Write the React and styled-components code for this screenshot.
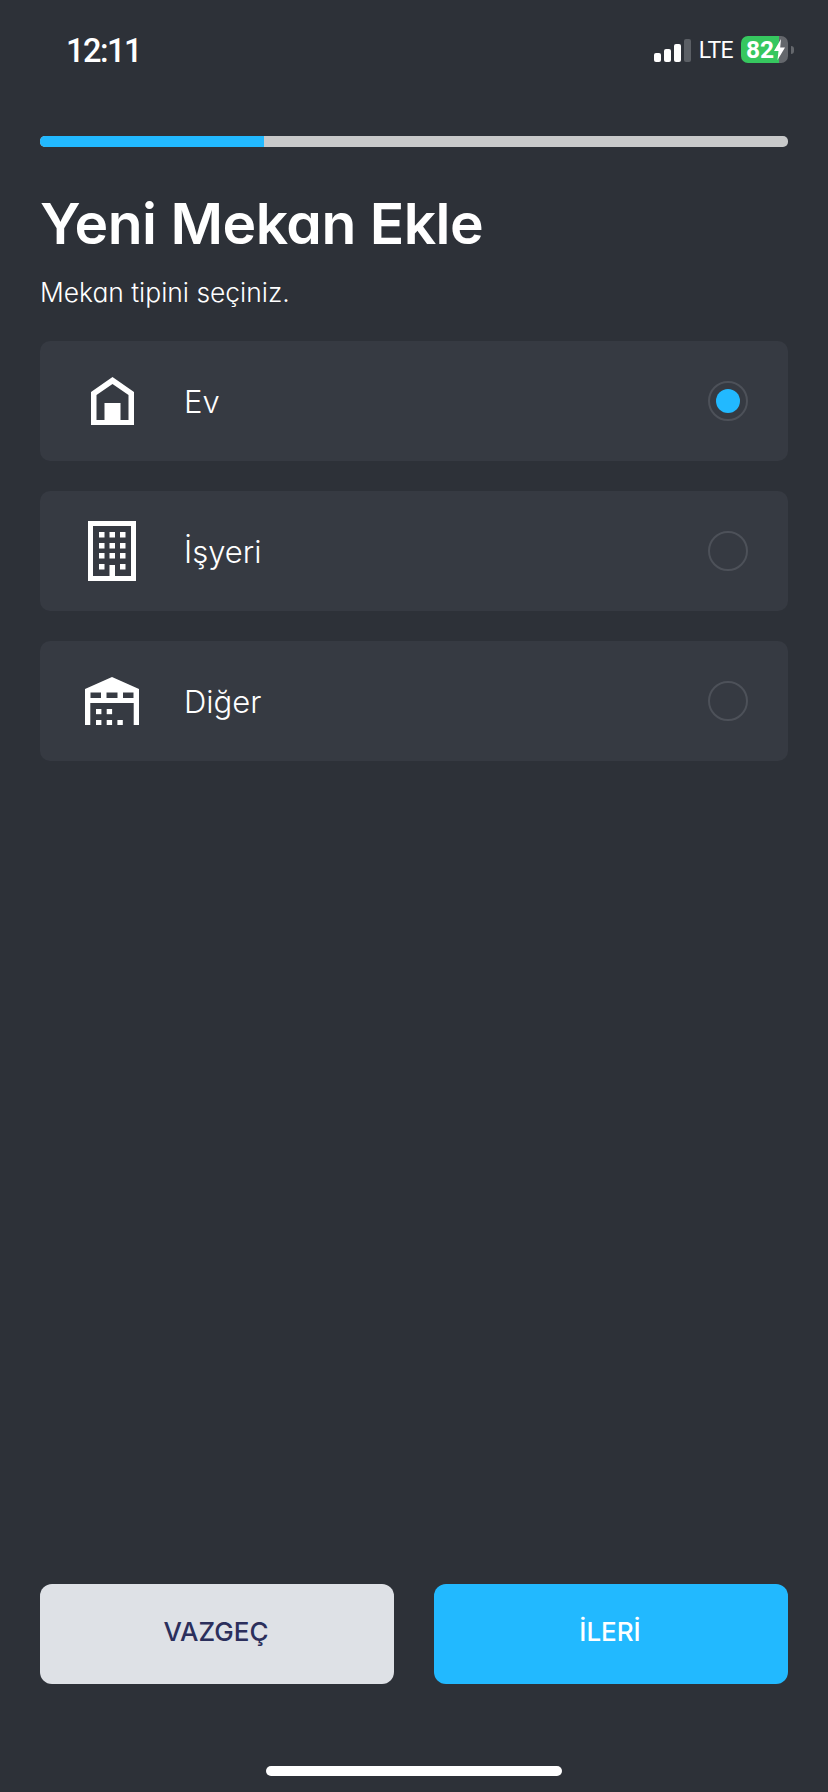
import React from "react";
import styled, { createGlobalStyle } from "styled-components";

const Global = createGlobalStyle`
  html, body { margin: 0; padding: 0; background: #2d3138; }
  * { box-sizing: border-box; }
`;

const Page = styled.div`
  width: 828px;
  height: 1792px;
  background: #2d3138;
  color: #fff;
  display: flex;
  flex-direction: column;
  padding: 36px 40px 16px;
  font-family: Inter, "Noto Sans", sans-serif;
  font-feature-settings: "cv11" 1, "ss03" 1;
`;

const StatusBar = styled.div`
  display: flex;
  align-items: center;
  justify-content: space-between;
  height: 27px;
  padding-left: 26px;
  margin-right: -6px;
`;

const Time = styled.span`
  font: 500 32.5px/27px Roboto, sans-serif;
  letter-spacing: -1.5px;
  padding-top: 3px;
`;

const StatusRight = styled.div`
  display: flex;
  align-items: center;
`;

const Signal = styled.div`
  display: flex;
  align-items: flex-end;
  gap: 3px;
  height: 23px;
  margin-top: 2px;
`;

const SignalBar = styled.i`
  display: block;
  width: 7px;
  height: ${(p) => p.$h}px;
  border-radius: 2px;
  background: ${(p) => (p.$off ? "#5b5f65" : "#fff")};
`;

const Lte = styled.span`
  font: 400 23px/27px Roboto, sans-serif;
  margin: 2px 8px 0 8px;
  letter-spacing: -0.6px;
`;

const Battery = styled.div`
  width: 47px;
  height: 27px;
  border-radius: 7px;
  overflow: hidden;
  display: flex;
  align-items: center;
  padding-left: 5px;
  font: 700 24.5px/27px Roboto, sans-serif;
  background: linear-gradient(to right, #36c75f 38px, #64676c 38px);
`;

const BatteryNub = styled.i`
  display: block;
  width: 3px;
  height: 8px;
  margin-left: 3px;
  border-radius: 0 3px 3px 0;
  background: #64676c;
`;

const Progress = styled.div`
  height: 11px;
  margin-top: 73px;
  border-radius: 5px;
  background: #c8c9ca;
  overflow: hidden;
`;

const ProgressFill = styled.div`
  height: 100%;
  width: 224px;
  background: #22b9ff;
`;

const Title = styled.h1`
  margin: 43px 0 0;
  font-size: 57px;
  line-height: 68px;
  font-weight: 600;
  letter-spacing: -0.5px;
`;

const Subtitle = styled.p`
  margin: 16px 0 0;
  font-size: 26.4px;
  line-height: 36px;
  font-weight: 300;
`;

const Options = styled.div`
  display: flex;
  flex-direction: column;
  gap: 30px;
  margin-top: 31px;
`;

const Card = styled.div`
  height: 120px;
  background: #363a42;
  border-radius: 10px;
  display: flex;
  align-items: center;
  padding-right: 40px;
`;

const IconSlot = styled.div`
  width: 144px;
  display: flex;
  justify-content: center;
`;

const Label = styled.span`
  flex: 1;
  font-size: 31px;
  font-weight: 300;
  line-height: 40px;
  padding-top: 1px;
`;

const Radio = styled.div`
  width: 40px;
  height: 40px;
  border-radius: 50%;
  border: 2px solid #4d5159;
  display: flex;
  align-items: center;
  justify-content: center;
`;

const RadioDot = styled.div`
  width: 24px;
  height: 24px;
  border-radius: 50%;
  background: #22b9ff;
`;

const Footer = styled.div`
  margin-top: auto;
  display: grid;
  grid-template-columns: 1fr 1fr;
  gap: 40px;
`;

const Button = styled.button`
  height: 100px;
  border: 0;
  border-radius: 12px;
  padding: 0 2px 6px 0;
  font-family: Inter, sans-serif;
  font-size: 26px;
  font-weight: 500;
  background: ${(p) => (p.$primary ? "#22b9ff" : "#dee1e6")};
  color: ${(p) => (p.$primary ? "#fff" : "#2b2f5c")};
`;

const HomeBar = styled.div`
  width: 296px;
  height: 10px;
  border-radius: 5px;
  background: #fff;
  margin: 82px auto 0;
`;

const Home = () => (
  <svg width="43" height="48" viewBox="0 0 43 48" fill="#fff">
    <path
      fillRule="evenodd"
      d="M21.5 0L43 15V48H0V15ZM21.5 7L5.5 18V43H13.5V26H29.5V43H37.5V18Z"
    />
  </svg>
);

const Building = () => (
  <svg width="48" height="60" viewBox="0 0 48 60" fill="#fff">
    <path fillRule="evenodd" d="M0 0H48V60H0ZM5 5V55H43V5Z" />
    {[11, 22, 32].map((y) =>
      [11, 21.5, 32].map((x) => <rect key={`${x}-${y}`} x={x} y={y} width="5.5" height="5.5" />)
    )}
    <rect x="11" y="43" width="5.5" height="5.5" />
    <rect x="32" y="43" width="5.5" height="5.5" />
    <rect x="21.5" y="44" width="5.5" height="12" />
  </svg>
);

const Warehouse = () => (
  <svg width="54" height="48" viewBox="0 0 54 48" fill="#fff">
    <path
      fillRule="evenodd"
      d="M27 0L54 12V48H48.7V26H5.3V48H0V12ZM5.5 15.5V21H16V15.5ZM21.5 15.5V21H32.5V15.5ZM38 15.5V21H48.5V15.5Z"
    />
    <rect x="11" y="32" width="5.4" height="5.2" />
    <rect x="21.7" y="32" width="5.4" height="5.2" />
    <rect x="11" y="43" width="5.4" height="5" />
    <rect x="21.7" y="43" width="5.4" height="5" />
    <rect x="32.4" y="43" width="5.4" height="5" />
  </svg>
);

const Bolt = () => (
  <svg width="11" height="21" viewBox="0 0 11 21" fill="#fff">
    <path d="M7 0L0 12H4.5L3.5 21L11 8.5H6.2Z" />
  </svg>
);

const options = [
  { label: "Ev", Icon: Home, selected: true },
  { label: "İşyeri", Icon: Building },
  { label: "Diğer", Icon: Warehouse },
];

export default function App() {
  return (
    <Page>
      <Global />
      <StatusBar>
        <Time>12:11</Time>
        <StatusRight>
          <Signal>
            <SignalBar $h={9} />
            <SignalBar $h={13} />
            <SignalBar $h={18} />
            <SignalBar $h={23} $off />
          </Signal>
          <Lte>LTE</Lte>
          <Battery>
            82
            <Bolt />
          </Battery>
          <BatteryNub />
        </StatusRight>
      </StatusBar>
      <Progress>
        <ProgressFill />
      </Progress>
      <Title>Yeni Mekan Ekle</Title>
      <Subtitle>Mekan tipini seçiniz.</Subtitle>
      <Options>
        {options.map(({ label, Icon, selected }) => (
          <Card key={label}>
            <IconSlot>
              <Icon />
            </IconSlot>
            <Label>{label}</Label>
            <Radio>{selected && <RadioDot />}</Radio>
          </Card>
        ))}
      </Options>
      <Footer>
        <Button>VAZGEÇ</Button>
        <Button $primary>İLERİ</Button>
      </Footer>
      <HomeBar />
    </Page>
  );
}
